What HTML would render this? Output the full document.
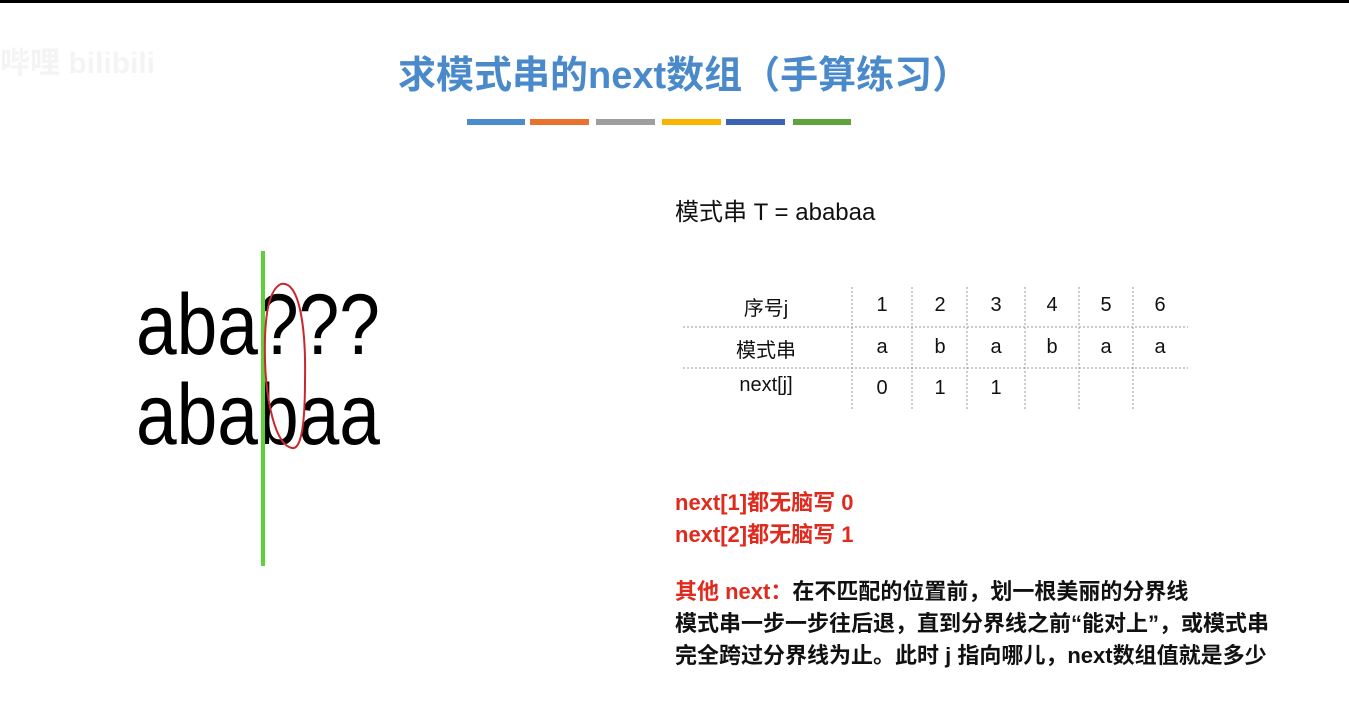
<!DOCTYPE html>
<html><head><meta charset="utf-8"><style>
body{margin:0;width:1349px;height:710px;background:#fff;position:relative;overflow:hidden;font-family:"Liberation Sans","Noto Sans CJK SC",sans-serif}
.a{position:absolute;white-space:nowrap}
.big{font-size:86px;color:#000;line-height:1;transform:scaleX(0.85);transform-origin:0 0}
.t{position:absolute;font-size:20px;color:#111;transform:translateX(-50%);white-space:nowrap}
.note{font-size:22px;font-weight:bold;line-height:32px;color:#111}
.note .red,.red{color:#e02a1d}
</style></head><body>
<div class="a" style="left:0;top:0;width:1349px;height:3px;background:#000"></div>
<div class="a" style="left:0;top:38px;font-size:30px;font-weight:bold;color:#f4f4f4">哔哩 bilibili</div>
<div class="a" style="left:398px;top:44px;font-size:38px;font-weight:bold;color:#4a8acb">求模式串的next数组（手算练习）</div>
<div class="a" style="left:467px;top:119px;width:58px;height:6px;background:#4a8ccc"></div>
<div class="a" style="left:530px;top:119px;width:59px;height:6px;background:#e8722e"></div>
<div class="a" style="left:596px;top:119px;width:59px;height:6px;background:#9e9e9e"></div>
<div class="a" style="left:662px;top:119px;width:59px;height:6px;background:#f7b500"></div>
<div class="a" style="left:726px;top:119px;width:59px;height:6px;background:#3d63b5"></div>
<div class="a" style="left:793px;top:119px;width:58px;height:6px;background:#5ea33c"></div>

<div class="a" style="left:675px;top:192px;font-size:24px;color:#111">模式串 T = ababaa</div>

<div class="a big" style="left:136px;top:282px">aba???</div>
<div class="a big" style="left:136px;top:372px">ababaa</div>
<div class="a" style="left:261px;top:251px;width:4px;height:315px;background:#5fcf3a"></div>
<svg class="a" style="left:0;top:0" width="1349" height="710"><path d="M281 284 C300 280 306 330 305 380 C305 420 302 450 292 448 C275 445 266 400 265 360 C264 320 268 290 281 284 Z" fill="none" stroke="#c8282c" stroke-width="2"/>
<g stroke="#999" stroke-width="1" stroke-dasharray="2,2">
<line x1="683" y1="327" x2="1188" y2="327"/><line x1="683" y1="368" x2="1188" y2="368"/>
<line x1="852" y1="287" x2="852" y2="410"/><line x1="912" y1="287" x2="912" y2="410"/><line x1="967" y1="287" x2="967" y2="410"/><line x1="1025" y1="287" x2="1025" y2="410"/><line x1="1079" y1="287" x2="1079" y2="410"/><line x1="1133" y1="287" x2="1133" y2="410"/></g></svg>

<div class="t" style="left:766px;top:292px">序号j</div>
<div class="t" style="left:766px;top:334px">模式串</div>
<div class="t" style="left:766px;top:374px">next[j]</div>
<div class="t" style="left:882px;top:294px">1</div><div class="t" style="left:940px;top:294px">2</div><div class="t" style="left:996px;top:294px">3</div><div class="t" style="left:1052px;top:294px">4</div><div class="t" style="left:1106px;top:294px">5</div><div class="t" style="left:1160px;top:294px">6</div>
<div class="t" style="left:882px;top:336px">a</div><div class="t" style="left:940px;top:336px">b</div><div class="t" style="left:996px;top:336px">a</div><div class="t" style="left:1052px;top:336px">b</div><div class="t" style="left:1106px;top:336px">a</div><div class="t" style="left:1160px;top:336px">a</div>
<div class="t" style="left:882px;top:377px">0</div><div class="t" style="left:940px;top:377px">1</div><div class="t" style="left:996px;top:377px">1</div>

<div class="a note" style="left:675px;top:487px"><span class="red">next[1]都无脑写 0<br>next[2]都无脑写 1</span></div>
<div class="a note" style="left:675px;top:576px"><span class="red">其他 next：</span>在不匹配的位置前，划一根美丽的分界线<br>模式串一步一步往后退，直到分界线之前“能对上”，或模式串<br>完全跨过分界线为止。此时 j 指向哪儿，next数组值就是多少</div>
</body></html>
